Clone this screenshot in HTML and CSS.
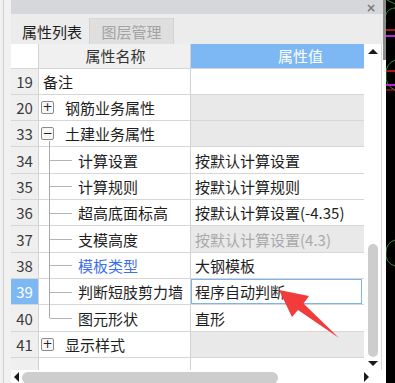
FILE: index.html
```html
<!DOCTYPE html>
<html>
<head>
<meta charset="utf-8">
<link rel="stylesheet" href="styles.css">
</head>
<body>
<div class="screen">
  <div class="lstrip"><div class="lline"></div></div>
  <div class="panel">
    <div class="titlebar"><span class="close">×</span></div>
    <div class="tabs">
      <div class="tab active">属性列表</div>
      <div class="tab inactive">图层管理</div>
    </div>
    <div class="gridwrap">
      <div class="grid">
        <div class="row head">
          <div class="num blank"></div>
          <div class="name hname">属性名称</div>
          <div class="val hval">属性值</div>
        </div>
        <div class="row">
          <div class="num">19</div>
          <div class="name">备注</div>
          <div class="val"></div>
        </div>
        <div class="row">
          <div class="num">20</div>
          <div class="name group"><span class="box">+</span>钢筋业务属性</div>
          <div class="val gray"></div>
        </div>
        <div class="row">
          <div class="num">33</div>
          <div class="name group open"><span class="box">−</span>土建业务属性</div>
          <div class="val gray"></div>
        </div>
        <div class="row">
          <div class="num">34</div>
          <div class="name child">计算设置</div>
          <div class="val">按默认计算设置</div>
        </div>
        <div class="row">
          <div class="num">35</div>
          <div class="name child">计算规则</div>
          <div class="val">按默认计算规则</div>
        </div>
        <div class="row">
          <div class="num">36</div>
          <div class="name child">超高底面标高</div>
          <div class="val">按默认计算设置(-4.35)</div>
        </div>
        <div class="row">
          <div class="num">37</div>
          <div class="name child">支模高度</div>
          <div class="val gray dim">按默认计算设置(4.3)</div>
        </div>
        <div class="row">
          <div class="num">38</div>
          <div class="name child blue">模板类型</div>
          <div class="val">大钢模板</div>
        </div>
        <div class="row sel">
          <div class="num">39</div>
          <div class="name child">判断短肢剪力墙</div>
          <div class="val edit">程序自动判断</div>
        </div>
        <div class="row">
          <div class="num">40</div>
          <div class="name child last">图元形状</div>
          <div class="val">直形</div>
        </div>
        <div class="row">
          <div class="num">41</div>
          <div class="name group"><span class="box">+</span>显示样式</div>
          <div class="val gray"></div>
        </div>
        <div class="row filler">
          <div class="num"></div>
          <div class="name"></div>
          <div class="val"></div>
        </div>
      </div>
      <div class="vscroll">
        <div class="uparrow"></div>
        <div class="track"><div class="thumb"></div></div>
        <div class="downarrow"></div>
      </div>
    </div>
    <div class="hscroll">
      <div class="leftarrow"></div>
      <div class="htrack"><div class="hthumb"></div></div>
      <div class="rightarrow"></div>
    </div>
  </div>
  <div class="gap"><div class="gapbar"></div></div>
  <div class="cad">
    <svg width="9" height="383" viewBox="3 0 9 383">
      <path d="M12 8 A10 10 0 0 0 3 22" stroke="#2a9a2a" fill="none" stroke-width="1"/>
      <line x1="2" y1="30" x2="12" y2="30" stroke="#e02020" stroke-width="1.5"/>
      <line x1="2" y1="36" x2="12" y2="36" stroke="#c020e0" stroke-width="2"/>
      <path d="M12 60 A14 14 0 0 0 3 75 A14 14 0 0 0 12 90" stroke="#2a9a2a" fill="none" stroke-width="1"/>
      <line x1="2" y1="71" x2="12" y2="71" stroke="#e02020" stroke-width="1.5"/>
      <line x1="2" y1="85" x2="12" y2="85" stroke="#c020e0" stroke-width="2"/>
      <line x1="2" y1="90" x2="12" y2="90" stroke="#e02020" stroke-width="1"/>
      <path d="M12 240 A12 12 0 0 0 3 252 A12 12 0 0 0 12 266" stroke="#2a9a2a" fill="none" stroke-width="1"/>
      <path d="M12 4 L4 0" stroke="#2a9a2a" fill="none" stroke-width="1"/>
    </svg>
  </div>
  <svg class="arrow" width="395" height="383" viewBox="0 0 395 383">
    <polygon points="279,290 309,296 303.5,303.5 339,338 298,310 292,317" fill="#f23c3c"/>
  </svg>
</div>
</body>
</html>
```

FILE: styles.css
```css
html, body {
  margin: 0;
  padding: 0;
  background: #ffffff;
}
.screen {
  position: relative;
  width: 395px;
  height: 383px;
  overflow: hidden;
  display: flex;
  font-family: "Noto Sans CJK SC", "Noto Sans", sans-serif;
  font-size: 15px;
  color: #1e1e1e;
}
.lstrip {
  width: 11px;
  flex: none;
  background: #f1f1f1;
  display: flex;
}
.lline {
  margin-left: 3px;
  width: 1px;
  background: #cfcfcf;
}
.panel {
  width: 372px;
  flex: none;
  display: flex;
  flex-direction: column;
  background: #ffffff;
}
.titlebar {
  height: 14px;
  flex: none;
  background: #d6d7da;
  display: flex;
  justify-content: flex-end;
  align-items: flex-end;
}
.close {
  font-family: "DejaVu Sans", sans-serif;
  font-size: 12px;
  line-height: 12px;
  color: #7a7a7a;
  margin-right: 7px;
  font-weight: bold;
}
.tabs {
  height: 30px;
  flex: none;
  background: #ececec;
  display: flex;
  align-items: flex-end;
}
.tab {
  height: 26px;
  box-sizing: border-box;
  display: flex;
  align-items: center;
  justify-content: center;
  line-height: 1;
}
.tab.active {
  width: 78px;
  padding-left: 4px;
  color: #1e1e1e;
  background: #ececec;
}
.tab.inactive {
  width: 85px;
  background: #dfdfdf;
  color: #a3a3a3;
  border-left: 1px solid #d2d2d2;
  border-right: 1px solid #d2d2d2;
  border-top: 1px solid #d8d8d8;
}
.gridwrap {
  height: 326px;
  flex: none;
  display: flex;
}
.grid {
  width: 353px;
  flex: none;
  display: flex;
  flex-direction: column;
}
.row {
  display: flex;
  height: 26.33px;
  box-sizing: border-box;
  border-bottom: 1px solid #d6d6d6;
  flex: none;
}
.row.head {
  height: 24.5px;
  border-bottom: 1px solid #d6d6d6;
}
.row.filler {
  flex: 1;
  border-bottom: none;
}
.num {
  width: 28px;
  flex: none;
  box-sizing: border-box;
  background: #efefef;
  display: flex;
  align-items: center;
  justify-content: center;
  font-size: 15px;
  color: #3a3a3a;
  border-right: 1px solid #d2d2d2;
}
.num.blank {
  background: #ffffff;
}
.name {
  width: 152px;
  flex: none;
  box-sizing: border-box;
  border-right: 1px solid #d2d2d2;
  display: flex;
  align-items: center;
  padding-left: 4px;
  position: relative;
  white-space: nowrap;
}
.name.hname {
  background: #f0f0f0;
  justify-content: center;
  padding-left: 2px;
  color: #333;
}
.val {
  width: 173px;
  flex: none;
  box-sizing: border-box;
  display: flex;
  align-items: center;
  padding-left: 4px;
  white-space: nowrap;
}
.val.hval {
  background: #7db8f4;
  color: #ffffff;
  padding-left: 87px;
}
.val.gray {
  background: #e9e9e9;
}
.val.dim {
  color: #a9a9a9;
}
.val.edit {
  border: 1.5px solid #7cb5ec;
  width: 171px;
  padding-left: 3px;
}
.row.sel .num {
  background: #7db8f4;
  color: #ffffff;
}
.name.group {
  padding-left: 2px;
}
.box {
  width: 13px;
  height: 13px;
  box-sizing: border-box;
  border: 1px solid #8a8a8a;
  border-radius: 2px;
  background: #f7f7f7;
  font-family: "DejaVu Sans", sans-serif;
  font-size: 12px;
  line-height: 11px;
  display: flex;
  align-items: center;
  justify-content: center;
  margin-right: 11px;
  color: #222;
  flex: none;
}
.name.open::after {
  content: "";
  position: absolute;
  left: 10px;
  top: 20px;
  bottom: -1px;
  width: 1px;
  background: #a8a8a8;
}
.name.child {
  padding-left: 39px;
}
.name.child::before {
  content: "";
  position: absolute;
  left: 10px;
  top: 0;
  bottom: -1px;
  width: 1px;
  background: #a8a8a8;
}
.name.child.last::before {
  bottom: 50%;
}
.name.child::after {
  content: "";
  position: absolute;
  left: 11px;
  top: 50%;
  width: 22px;
  height: 1px;
  background: #b4b4b4;
}
.name.blue {
  color: #3f6fe8;
}
.vscroll {
  width: 17px;
  flex: none;
  display: flex;
  flex-direction: column;
  align-items: center;
  border-right: 1px solid #d8d8d8;
}
.uparrow {
  margin-top: 5px;
  width: 0;
  height: 0;
  border-left: 5px solid transparent;
  border-right: 5px solid transparent;
  border-bottom: 5px solid #1a1a1a;
}
.track {
  flex: 1;
  width: 100%;
  display: flex;
  flex-direction: column;
  justify-content: flex-end;
  align-items: center;
  padding-bottom: 4px;
}
.thumb {
  width: 10px;
  height: 113px;
  border-radius: 5px;
  background: #cdcdcd;
}
.downarrow {
  margin-bottom: 4px;
  width: 0;
  height: 0;
  border-left: 5px solid transparent;
  border-right: 5px solid transparent;
  border-top: 5px solid #1a1a1a;
}
.hscroll {
  height: 13px;
  flex: none;
  display: flex;
  align-items: flex-end;
  background: #ffffff;
}
.leftarrow {
  margin-left: 3px;
  margin-bottom: 1px;
  width: 0;
  height: 0;
  border-top: 5px solid transparent;
  border-bottom: 5px solid transparent;
  border-right: 5px solid #1a1a1a;
}
.htrack {
  width: 330px;
  height: 11px;
  margin-left: 3px;
  display: flex;
}
.hthumb {
  width: 256px;
  height: 12px;
  border-radius: 6px;
  background: #cdcdcd;
}
.rightarrow {
  margin-left: 12px;
  margin-bottom: 1px;
  width: 0;
  height: 0;
  border-top: 5px solid transparent;
  border-bottom: 5px solid transparent;
  border-left: 5px solid #1a1a1a;
}
.gap {
  width: 3px;
  flex: none;
  background: #ffffff;
  display: flex;
  flex-direction: column;
}
.gapbar {
  height: 60px;
  background: #8c8c8c;
}
.cad {
  width: 9px;
  flex: none;
  background: #000000;
}
.arrow {
  position: absolute;
  left: 0;
  top: 0;
  pointer-events: none;
}
```
